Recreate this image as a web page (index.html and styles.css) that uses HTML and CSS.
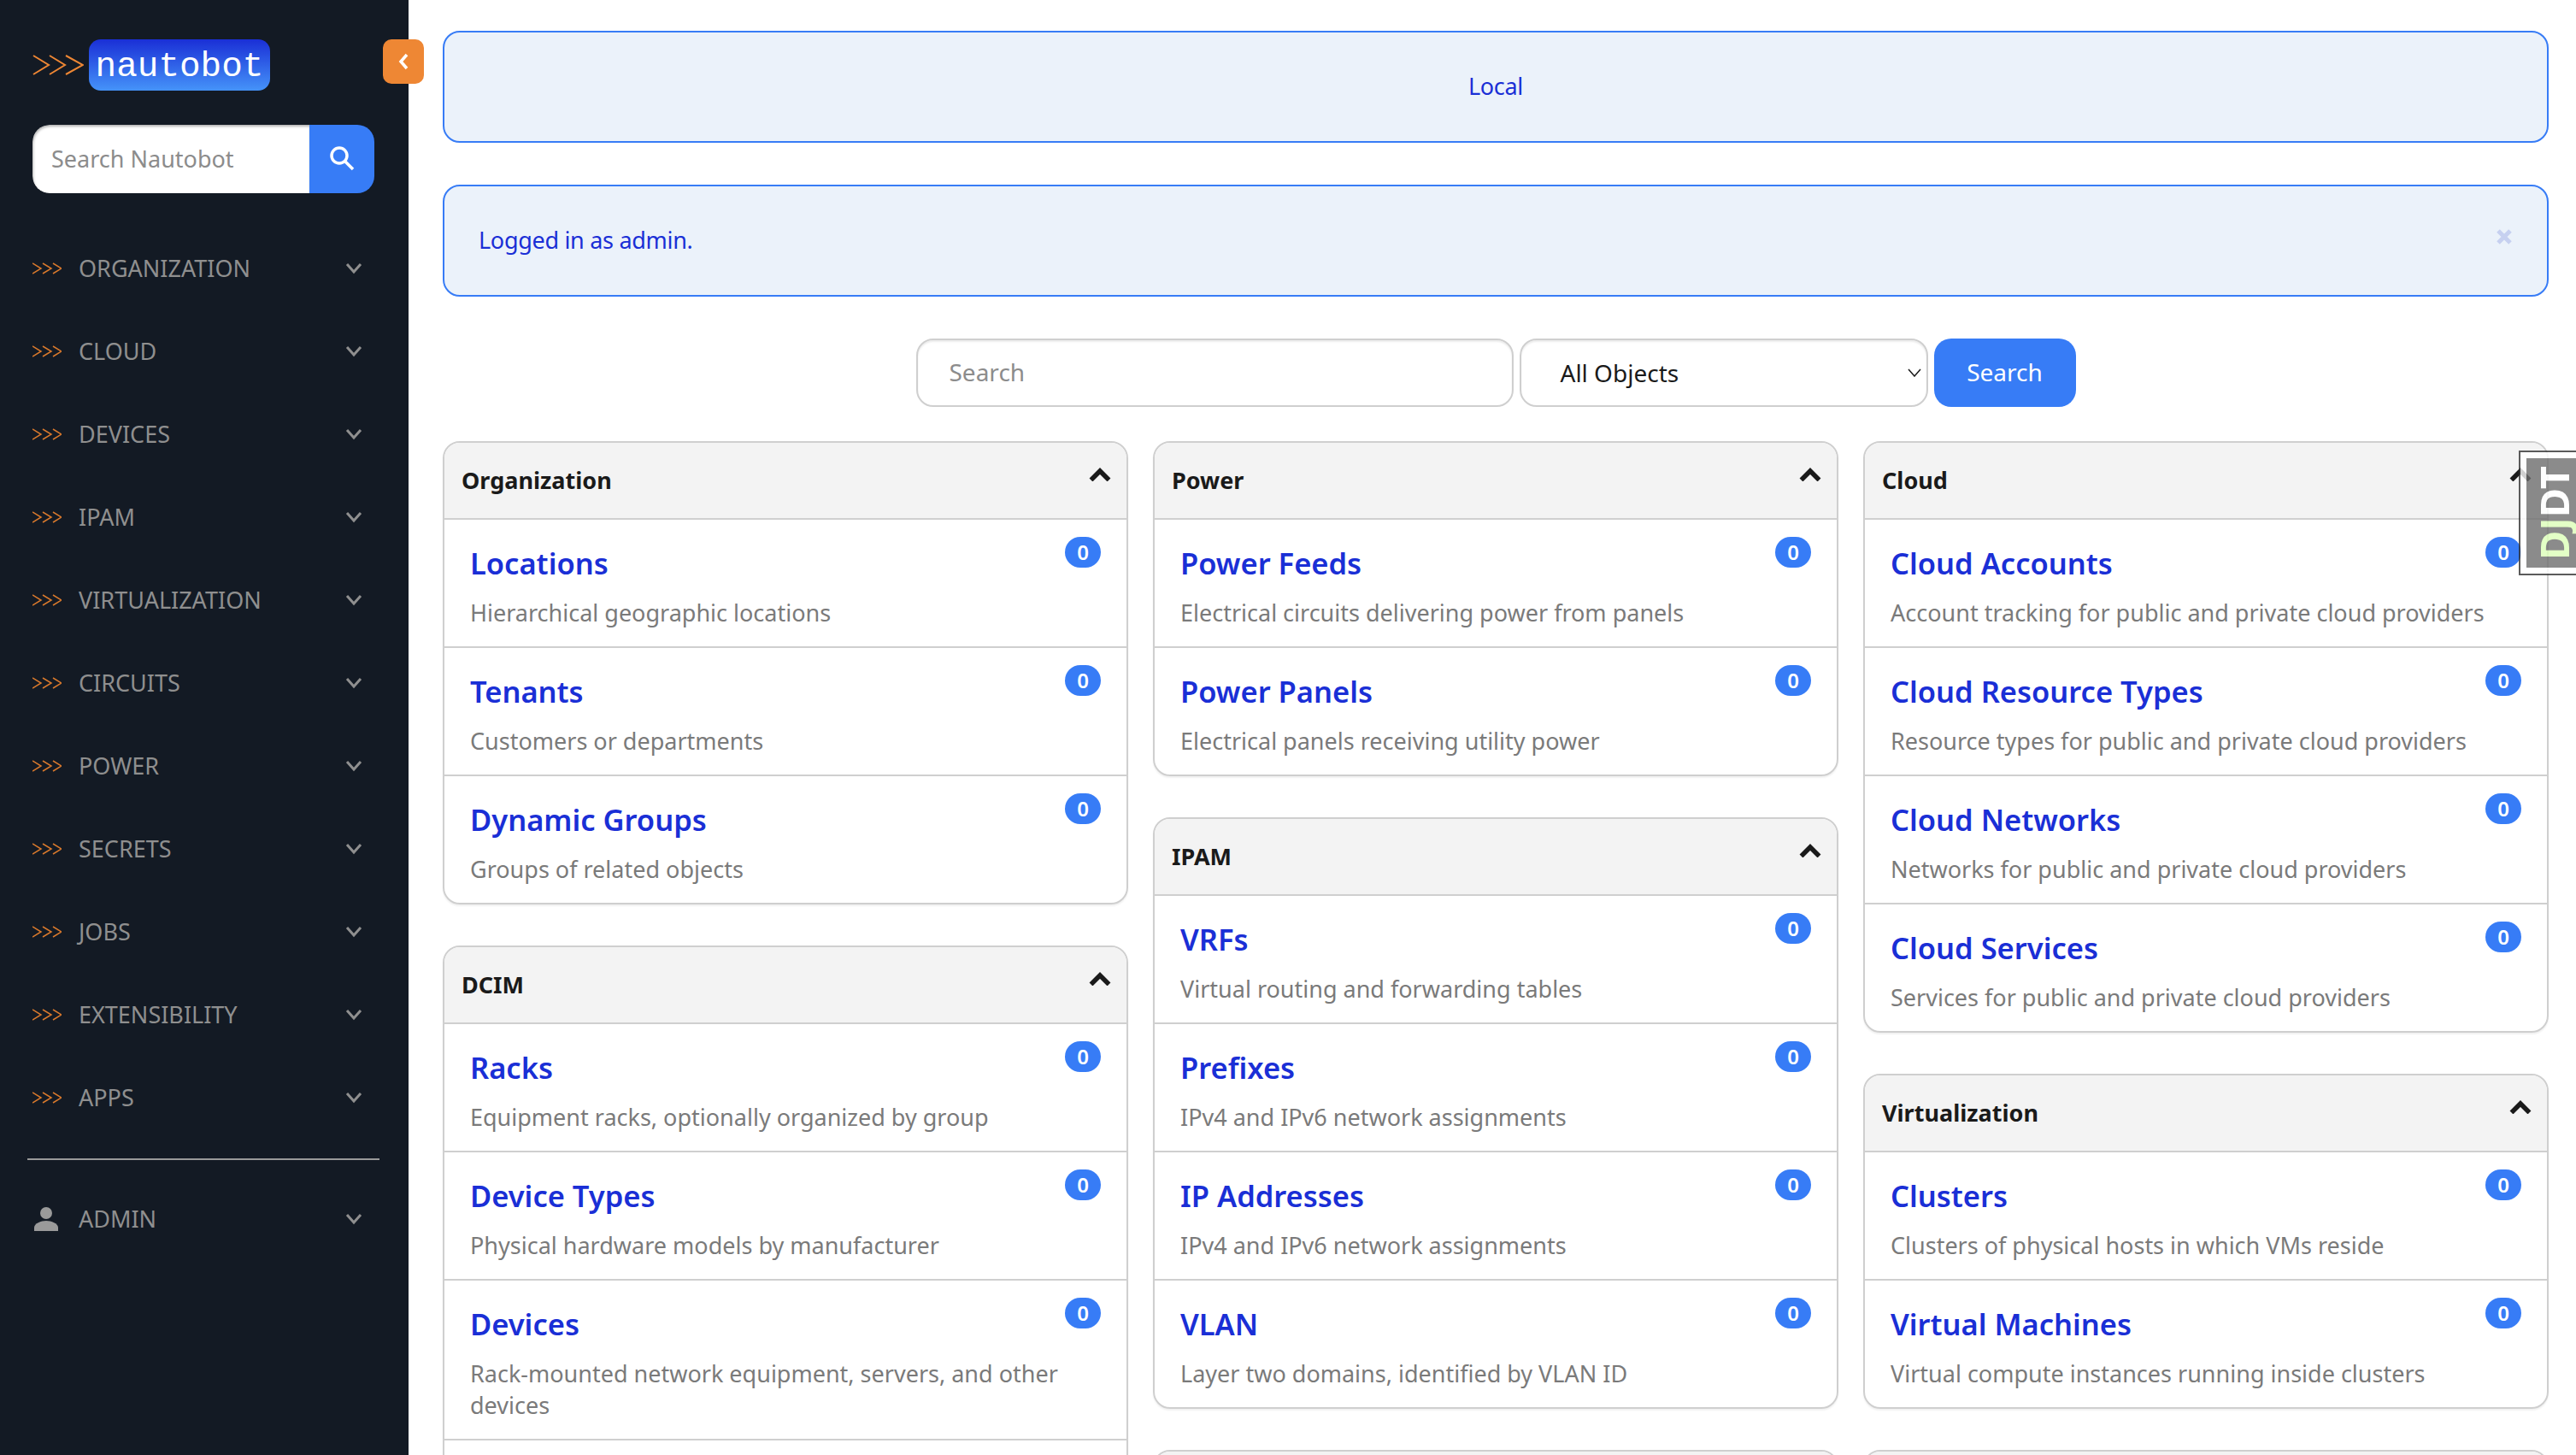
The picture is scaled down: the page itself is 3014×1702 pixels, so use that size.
FILE: index.html
```html
<!DOCTYPE html>
<html lang="en">
<head>
  <meta charset="UTF-8">
  <meta name="viewport" content="width=device-width, initial-scale=1.0">
  <title>Home - Nautobot</title>
  <link rel="stylesheet" href="styles.css">
</head>
<body>
  <aside class="sidebar">
    <div class="brand">
      <svg class="brand-arrows" viewBox="0 0 60 24" width="60" height="24"><path d="M1 1l18 11L1 23M20 1l18 11-18 11M39 1l20 11-20 11"/></svg>
      <span class="brand-name">nautobot</span>
    </div>
    <button class="collapse-btn"><svg viewBox="0 0 12 20" width="12" height="20"><path d="M10 2L3 10l7 8"/></svg></button>
    <form class="side-search">
      <input class="side-search-input" placeholder="Search Nautobot">
      <span class="side-search-btn"><svg viewBox="0 0 30 30" width="30" height="30"><circle cx="12" cy="12" r="9"/><path d="M18.500 18.500L28 28"/></svg></span>
    </form>
    <nav class="side-nav">
      <a class="nav-item"><svg class="nav-arrows" viewBox="0 0 34 14" width="34" height="14"><path d="M0 1l10 6L0 13M12 1l10 6-10 6M24 1l10 6-10 6"/></svg><span class="nav-label">ORGANIZATION</span><svg class="nav-caret" viewBox="0 0 20 14" width="20" height="14"><path d="M2 2l8 9 8-9"/></svg></a>
      <a class="nav-item"><svg class="nav-arrows" viewBox="0 0 34 14" width="34" height="14"><path d="M0 1l10 6L0 13M12 1l10 6-10 6M24 1l10 6-10 6"/></svg><span class="nav-label">CLOUD</span><svg class="nav-caret" viewBox="0 0 20 14" width="20" height="14"><path d="M2 2l8 9 8-9"/></svg></a>
      <a class="nav-item"><svg class="nav-arrows" viewBox="0 0 34 14" width="34" height="14"><path d="M0 1l10 6L0 13M12 1l10 6-10 6M24 1l10 6-10 6"/></svg><span class="nav-label">DEVICES</span><svg class="nav-caret" viewBox="0 0 20 14" width="20" height="14"><path d="M2 2l8 9 8-9"/></svg></a>
      <a class="nav-item"><svg class="nav-arrows" viewBox="0 0 34 14" width="34" height="14"><path d="M0 1l10 6L0 13M12 1l10 6-10 6M24 1l10 6-10 6"/></svg><span class="nav-label">IPAM</span><svg class="nav-caret" viewBox="0 0 20 14" width="20" height="14"><path d="M2 2l8 9 8-9"/></svg></a>
      <a class="nav-item"><svg class="nav-arrows" viewBox="0 0 34 14" width="34" height="14"><path d="M0 1l10 6L0 13M12 1l10 6-10 6M24 1l10 6-10 6"/></svg><span class="nav-label">VIRTUALIZATION</span><svg class="nav-caret" viewBox="0 0 20 14" width="20" height="14"><path d="M2 2l8 9 8-9"/></svg></a>
      <a class="nav-item"><svg class="nav-arrows" viewBox="0 0 34 14" width="34" height="14"><path d="M0 1l10 6L0 13M12 1l10 6-10 6M24 1l10 6-10 6"/></svg><span class="nav-label">CIRCUITS</span><svg class="nav-caret" viewBox="0 0 20 14" width="20" height="14"><path d="M2 2l8 9 8-9"/></svg></a>
      <a class="nav-item"><svg class="nav-arrows" viewBox="0 0 34 14" width="34" height="14"><path d="M0 1l10 6L0 13M12 1l10 6-10 6M24 1l10 6-10 6"/></svg><span class="nav-label">POWER</span><svg class="nav-caret" viewBox="0 0 20 14" width="20" height="14"><path d="M2 2l8 9 8-9"/></svg></a>
      <a class="nav-item"><svg class="nav-arrows" viewBox="0 0 34 14" width="34" height="14"><path d="M0 1l10 6L0 13M12 1l10 6-10 6M24 1l10 6-10 6"/></svg><span class="nav-label">SECRETS</span><svg class="nav-caret" viewBox="0 0 20 14" width="20" height="14"><path d="M2 2l8 9 8-9"/></svg></a>
      <a class="nav-item"><svg class="nav-arrows" viewBox="0 0 34 14" width="34" height="14"><path d="M0 1l10 6L0 13M12 1l10 6-10 6M24 1l10 6-10 6"/></svg><span class="nav-label">JOBS</span><svg class="nav-caret" viewBox="0 0 20 14" width="20" height="14"><path d="M2 2l8 9 8-9"/></svg></a>
      <a class="nav-item"><svg class="nav-arrows" viewBox="0 0 34 14" width="34" height="14"><path d="M0 1l10 6L0 13M12 1l10 6-10 6M24 1l10 6-10 6"/></svg><span class="nav-label">EXTENSIBILITY</span><svg class="nav-caret" viewBox="0 0 20 14" width="20" height="14"><path d="M2 2l8 9 8-9"/></svg></a>
      <a class="nav-item"><svg class="nav-arrows" viewBox="0 0 34 14" width="34" height="14"><path d="M0 1l10 6L0 13M12 1l10 6-10 6M24 1l10 6-10 6"/></svg><span class="nav-label">APPS</span><svg class="nav-caret" viewBox="0 0 20 14" width="20" height="14"><path d="M2 2l8 9 8-9"/></svg></a>
      <hr class="nav-divider">
      <a class="nav-item"><svg class="nav-user" viewBox="0 0 28 28" width="28" height="28"><circle cx="14" cy="7" r="7"/><path d="M0 28v-4c0-5 8-8 14-8s14 3 14 8v4z"/></svg><span class="nav-label">ADMIN</span><svg class="nav-caret" viewBox="0 0 20 14" width="20" height="14"><path d="M2 2l8 9 8-9"/></svg></a>
    </nav>
  </aside>

  <main class="content">
    <div class="alert alert-center">Local</div>
    <div class="alert">Logged in as admin.<svg class="alert-close" viewBox="0 0 18 18" width="18" height="18"><path d="M2 2l14 14M16 2L2 16"/></svg></div>

    <form class="global-search">
      <input class="search-input" placeholder="Search">
      <div class="search-select">All Objects<svg viewBox="0 0 16 10" width="16" height="10"><path d="M1 1l7 8 7-8"/></svg></div>
      <button class="search-btn" type="button">Search</button>
    </form>

    <div class="columns">
      <div class="column">
        <section class="panel">
          <header class="panel-head"><span>Organization</span><svg viewBox="0 0 26 16" width="26" height="16"><path d="M2.500 14.500L13 4l10.500 10.500"/></svg></header>
          <div class="panel-row"><span class="badge">0</span><a class="row-title">Locations</a><p class="row-desc">Hierarchical geographic locations</p></div>
          <div class="panel-row"><span class="badge">0</span><a class="row-title">Tenants</a><p class="row-desc">Customers or departments</p></div>
          <div class="panel-row"><span class="badge">0</span><a class="row-title">Dynamic Groups</a><p class="row-desc">Groups of related objects</p></div>
        </section>
        <section class="panel">
          <header class="panel-head"><span>DCIM</span><svg viewBox="0 0 26 16" width="26" height="16"><path d="M2.500 14.500L13 4l10.500 10.500"/></svg></header>
          <div class="panel-row"><span class="badge">0</span><a class="row-title">Racks</a><p class="row-desc">Equipment racks, optionally organized by group</p></div>
          <div class="panel-row"><span class="badge">0</span><a class="row-title">Device Types</a><p class="row-desc">Physical hardware models by manufacturer</p></div>
          <div class="panel-row"><span class="badge">0</span><a class="row-title">Devices</a><p class="row-desc">Rack-mounted network equipment, servers, and other devices</p></div>
          <div class="panel-row panel-row-empty"></div>
        </section>
      </div>

      <div class="column">
        <section class="panel">
          <header class="panel-head"><span>Power</span><svg viewBox="0 0 26 16" width="26" height="16"><path d="M2.500 14.500L13 4l10.500 10.500"/></svg></header>
          <div class="panel-row"><span class="badge">0</span><a class="row-title">Power Feeds</a><p class="row-desc">Electrical circuits delivering power from panels</p></div>
          <div class="panel-row"><span class="badge">0</span><a class="row-title">Power Panels</a><p class="row-desc">Electrical panels receiving utility power</p></div>
        </section>
        <section class="panel">
          <header class="panel-head"><span>IPAM</span><svg viewBox="0 0 26 16" width="26" height="16"><path d="M2.500 14.500L13 4l10.500 10.500"/></svg></header>
          <div class="panel-row"><span class="badge">0</span><a class="row-title">VRFs</a><p class="row-desc">Virtual routing and forwarding tables</p></div>
          <div class="panel-row"><span class="badge">0</span><a class="row-title">Prefixes</a><p class="row-desc">IPv4 and IPv6 network assignments</p></div>
          <div class="panel-row"><span class="badge">0</span><a class="row-title">IP Addresses</a><p class="row-desc">IPv4 and IPv6 network assignments</p></div>
          <div class="panel-row"><span class="badge">0</span><a class="row-title">VLAN</a><p class="row-desc">Layer two domains, identified by VLAN ID</p></div>
        </section>
        <section class="panel">
          <header class="panel-head"></header>
        </section>
      </div>

      <div class="column">
        <section class="panel">
          <header class="panel-head"><span>Cloud</span><svg viewBox="0 0 26 16" width="26" height="16"><path d="M2.500 14.500L13 4l10.500 10.500"/></svg></header>
          <div class="panel-row"><span class="badge">0</span><a class="row-title">Cloud Accounts</a><p class="row-desc">Account tracking for public and private cloud providers</p></div>
          <div class="panel-row"><span class="badge">0</span><a class="row-title">Cloud Resource Types</a><p class="row-desc">Resource types for public and private cloud providers</p></div>
          <div class="panel-row"><span class="badge">0</span><a class="row-title">Cloud Networks</a><p class="row-desc">Networks for public and private cloud providers</p></div>
          <div class="panel-row"><span class="badge">0</span><a class="row-title">Cloud Services</a><p class="row-desc">Services for public and private cloud providers</p></div>
        </section>
        <section class="panel">
          <header class="panel-head"><span>Virtualization</span><svg viewBox="0 0 26 16" width="26" height="16"><path d="M2.500 14.500L13 4l10.500 10.500"/></svg></header>
          <div class="panel-row"><span class="badge">0</span><a class="row-title">Clusters</a><p class="row-desc">Clusters of physical hosts in which VMs reside</p></div>
          <div class="panel-row"><span class="badge">0</span><a class="row-title">Virtual Machines</a><p class="row-desc">Virtual compute instances running inside clusters</p></div>
        </section>
        <section class="panel">
          <header class="panel-head"></header>
        </section>
      </div>
    </div>
  </main>

  <div class="djdt-handle"><div class="djdt-inner"><span class="djdt-text"><span class="djdt-green">DJ</span>DT</span></div></div>
</body>
</html>
```

FILE: styles.css
```css
* {
  box-sizing: border-box;
}
html, body {
  height: 100%;
}
body {
  margin: 0;
  overflow: hidden;
  background-color: #fff;
  font-family: "Noto Sans", sans-serif;
  font-size: 27px;
  color: #1a1a1a;
}
svg path, svg circle {
  fill: none;
}

/* sidebar */
.sidebar {
  position: fixed;
  top: 0;
  left: 0;
  width: 478px;
  height: 100%;
  padding: 46px 0 0 38px;
  background-color: #131a24;
}
.brand {
  display: flex;
  align-items: center;
  height: 60px;
}
.brand-arrows path {
  stroke: #ee8734;
  stroke-width: 2;
}
.brand-name {
  margin-left: 6px;
  width: 212px;
  height: 60px;
  border-radius: 14px;
  background: linear-gradient(#1a2fd6, #4593f9);
  color: #fff;
  font-family: "Liberation Mono", monospace;
  font-size: 41px;
  line-height: 64px;
  text-align: center;
}
.collapse-btn {
  position: absolute;
  top: 46px;
  left: 448px;
  display: flex;
  align-items: center;
  justify-content: center;
  width: 48px;
  height: 52px;
  padding: 0;
  border: none;
  border-radius: 10px;
  background-color: #ee8734;
}
.collapse-btn path {
  stroke: #fff;
  stroke-width: 3.500;
}
.side-search {
  display: flex;
  width: 400px;
  height: 80px;
  margin-top: 40px;
  border-radius: 20px;
  overflow: hidden;
}
.side-search-input {
  flex: 1;
  min-width: 0;
  padding: 0 22px 2px;
  border: none;
  box-shadow: inset 1px 2px 3px rgba(0, 0, 0, .3);
  border-radius: 20px 0 0 20px;
  font: inherit;
  outline: none;
}
.side-search-input::placeholder {
  color: #8c8c8c;
}
.side-search-btn {
  display: flex;
  align-items: center;
  justify-content: center;
  width: 76px;
  padding-bottom: 3px;
  background-color: #377cf6;
}
.side-search-btn circle, .side-search-btn path {
  stroke: #fff;
  stroke-width: 3.500;
}
.side-nav {
  margin-top: 39px;
}
.nav-item {
  display: flex;
  align-items: center;
  width: 386px;
  height: 97px;
  color: #8f8f8f;
}
.nav-arrows {
  margin-right: 20px;
}
.nav-arrows path {
  stroke: #d9792c;
  stroke-width: 1.500;
}
.nav-label {
  flex: 1;
}
.nav-caret path {
  stroke: #8f8f8f;
  stroke-width: 3;
}
.nav-user {
  margin: 0 24px 0 2px;
}
.nav-user circle, .nav-user path {
  fill: #9a9a9a;
}
.nav-divider {
  width: 412px;
  height: 2px;
  margin: 23px 0 20px -6px;
  border: none;
  background-color: #999;
}

/* main area */
.content {
  height: 100%;
  margin-left: 478px;
  padding: 36px 32px 0 40px;
  overflow: hidden;
}
.alert {
  position: relative;
  display: flex;
  align-items: center;
  height: 131px;
  margin-bottom: 49px;
  padding: 0 40px 3px;
  border: 2px solid #377cf6;
  border-radius: 20px;
  background-color: #ebf2fa;
  color: #1a2fd6;
  letter-spacing: -.3px;
}
.alert-center {
  justify-content: center;
}
.alert-close {
  position: absolute;
  top: 50px;
  right: 41px;
}
.alert-close path {
  stroke: #c6d0f0;
  stroke-width: 5;
}
.global-search {
  display: flex;
  justify-content: center;
  gap: 7px;
  height: 80px;
  margin-bottom: 40px;
}
.search-input {
  width: 699px;
  padding: 0 37px 2px;
  border: 2px solid #cfcfcf;
  border-radius: 20px;
  box-shadow: inset 0 2px 2px rgba(0, 0, 0, .08);
  font: inherit;
  font-size: 28px;
  outline: none;
}
.search-input::placeholder {
  color: #8c8c8c;
}
.search-select {
  display: flex;
  align-items: center;
  justify-content: space-between;
  width: 478px;
  padding: 0 6px 0 46px;
  border: 2px solid #cfcfcf;
  border-radius: 20px;
  box-shadow: inset 0 2px 2px rgba(0, 0, 0, .08);
  font-size: 28px;
}
.search-select path {
  stroke: #1a1a1a;
  stroke-width: 1.500;
}
.search-btn {
  width: 166px;
  padding: 0 0 2px;
  border: none;
  border-radius: 20px;
  background-color: #377cf6;
  color: #fff;
  font: inherit;
  font-size: 28px;
}
.columns {
  display: flex;
  gap: 29px;
  align-items: flex-start;
}
.column {
  flex: 1;
  min-width: 0;
}
.panel {
  margin-bottom: 48px;
  border: 2px solid #cfcfcf;
  border-radius: 20px;
  overflow: hidden;
  box-shadow: 0 2px 2px rgba(0, 0, 0, .06);
}
.panel-head {
  display: flex;
  align-items: center;
  justify-content: space-between;
  height: 88px;
  padding: 0 20px 2px;
  background-color: #f3f3f3;
  font-weight: 700;
}
.panel-head svg {
  margin: -12px -2px 0 0;
}
.panel-head path {
  stroke: #1a1a1a;
  stroke-width: 5.500;
}
.panel-row {
  position: relative;
  padding: 26px 30px 21px;
  border-top: 2px solid #cfcfcf;
}
.panel-row-empty {
  height: 150px;
}
.row-title {
  display: block;
  color: #1a2fd6;
  font-size: 34.500px;
  font-weight: 600;
  line-height: 50px;
}
.row-desc {
  margin: 14px 0 0;
  color: #7a7a7a;
  line-height: 37px;
}
.badge {
  position: absolute;
  top: 20px;
  right: 30px;
  width: 42px;
  height: 36px;
  border-radius: 18px;
  background-color: #377cf6;
  color: #fff;
  font-size: 24px;
  font-weight: 600;
  line-height: 36px;
  text-align: center;
}

/* debug toolbar handle */
.djdt-handle {
  position: fixed;
  top: 527px;
  right: 0;
  width: 67px;
  height: 146px;
  padding: 7px 0 7px 7px;
  border: 2px solid #333;
  border-right: none;
  background-color: #fff;
  opacity: .8;
}
.djdt-inner {
  display: flex;
  align-items: center;
  justify-content: center;
  height: 100%;
  background-color: #6f6f6f;
}
.djdt-text {
  margin-left: 6px;
  writing-mode: vertical-rl;
  transform: rotate(180deg);
  color: #fff;
  font-family: "Noto Sans", sans-serif;
  font-size: 47px;
  font-weight: 700;
  line-height: 48px;
}
.djdt-green {
  color: #dcffb8;
}
```
